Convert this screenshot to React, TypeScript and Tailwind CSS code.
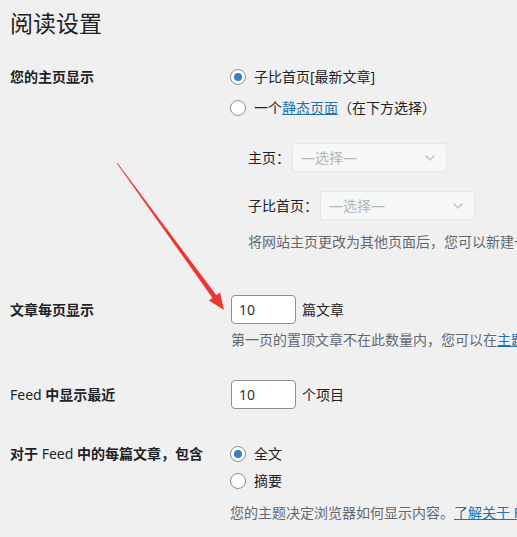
import React from 'react'

const font = { fontFamily: '"Noto Sans", "Noto Sans CJK SC", sans-serif' }

const Radio: React.FC<{ checked?: boolean }> = ({ checked }) => (
  <span className="flex h-4 w-4 shrink-0 items-center justify-center rounded-full border border-[#8c8f94] bg-white">
    {checked && <span className="h-2 w-2 rounded-full bg-[#3582c4]" />}
  </span>
)

const Select: React.FC = () => (
  <div className="flex h-[29px] w-[155px] shrink-0 items-center justify-between rounded-[3px] border border-[#e6e6e7] bg-[#f6f7f7] pl-[8px] pr-[10px] text-[#b4b6b9]">
    <span>—选择—</span>
    <svg width="12" height="8" viewBox="0 0 12 8" fill="none">
      <path d="M1.5 1.5 6 6l4.5-4.5" stroke="#c3c4c7" strokeWidth="1.3" />
    </svg>
  </div>
)

const NumberBox: React.FC<{ value: string }> = ({ value }) => (
  <div className="flex h-[29px] w-[65px] shrink-0 items-center rounded-[4px] border border-[#8c8f94] bg-white pl-[7px] text-[#2c3338]">
    {value}
  </div>
)

export default function App() {
  return (
    <div
      className="relative h-[537px] w-[517px] overflow-hidden whitespace-nowrap bg-[#f0f0f1] pl-[10px] text-[14px] text-[#1d2327]"
      style={font}
    >
      <h1 className="pt-[8px] text-[23px] font-normal leading-[30px]">阅读设置</h1>

      {/* 主页显示 */}
      <div className="mt-[23px] flex">
        <div className="flex h-[31px] w-[220px] shrink-0 items-center font-bold">您的主页显示</div>
        <div className="shrink-0">
          <div className="flex h-[31px] items-center gap-2">
            <Radio checked />
            <span>子比首页[最新文章]</span>
          </div>
          <div className="flex h-[31px] items-center gap-2">
            <Radio />
            <span>
              一个<a className="text-[#2271b1] underline">静态页面</a>（在下方选择）
            </span>
          </div>
          <div className="pl-[18px]">
            <div className="mt-[20px] flex items-center gap-[2px]">
              <span>主页：</span>
              <Select />
            </div>
            <div className="mt-[19px] flex items-center gap-[2px]">
              <span>子比首页：</span>
              <Select />
            </div>
            <p className="mt-[11px] leading-[22px] text-[#646970]">
              将网站主页更改为其他页面后，您可以新建一个
            </p>
          </div>
        </div>
      </div>

      {/* 文章每页显示 */}
      <div className="mt-[42px] flex">
        <div className="flex h-[29px] w-[221px] shrink-0 items-center font-bold">文章每页显示</div>
        <div className="shrink-0">
          <div className="flex items-center gap-[6px]">
            <NumberBox value="10" />
            <span>篇文章</span>
          </div>
          <p className="mt-[5px] leading-[22px] text-[#646970]">
            第一页的置顶文章不在此数量内，您可以在<a className="text-[#2271b1] underline">主题</a>
          </p>
        </div>
      </div>

      {/* Feed 中显示最近 */}
      <div className="mt-[29px] flex">
        <div className="flex h-[29px] w-[221px] shrink-0 items-center font-bold">
          <span className="font-normal">Feed</span>&nbsp;中显示最近
        </div>
        <div className="flex shrink-0 items-center gap-[6px]">
          <NumberBox value="10" />
          <span>个项目</span>
        </div>
      </div>

      {/* Feed 包含 */}
      <div className="mt-[31px] flex">
        <div className="flex h-[27px] w-[220px] shrink-0 items-center font-bold">
          对于&nbsp;<span className="font-normal">Feed</span>&nbsp;中的每篇文章，包含
        </div>
        <div className="shrink-0">
          <div className="flex h-[27px] items-center gap-2">
            <Radio checked />
            <span>全文</span>
          </div>
          <div className="flex h-[27px] items-center gap-2">
            <Radio />
            <span>摘要</span>
          </div>
          <p className="mt-[8px] leading-[22px] text-[#646970]">
            您的主题决定浏览器如何显示内容。<a className="text-[#2271b1] underline">了解关于 F</a>
          </p>
        </div>
      </div>

      {/* 标注箭头 */}
      <svg className="pointer-events-none absolute left-0 top-0" width="517" height="537">
        <polygon points="116.7,163.2 117.3,162.8 216.6,295.6 212.8,298.4" fill="#f0352e" />
        <polygon points="224,310 220,292.5 209,300.5" fill="#f0352e" />
      </svg>
    </div>
  )
}
